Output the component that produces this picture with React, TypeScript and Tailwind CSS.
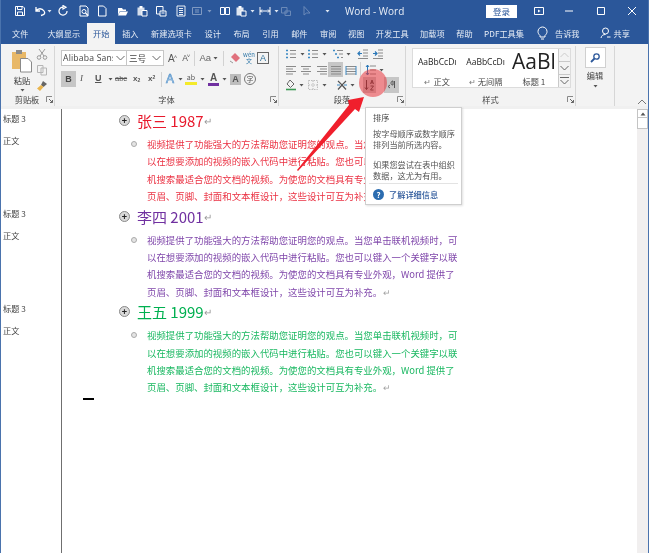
import React from "react";

const cjk = "font-['Noto_Sans_CJK_SC','Liberation_Sans',sans-serif]";

function Ic({ w = 12, h = 12, className = "", children }: { w?: number; h?: number; className?: string; children?: React.ReactNode }) {
    return (
        <svg width={w} height={h} viewBox={`0 0 ${w} ${h}`} fill="none" className={`shrink-0 ${className}`}>
            {children}
        </svg>
    );
}

function Dd({ className = "", color = "#555" }: { className?: string; color?: string }) {
    return (
        <Ic w={5} h={4} className={className}>
            <path d="M0.5 1 L4.5 1 L2.5 3.5 Z" fill={color} />
        </Ic>
    );
}

function Launcher({ className = "" }: { className?: string }) {
    return (
        <Ic w={7} h={7} className={className}>
            <path d="M0.5 6 V0.5 H6" stroke="#888" />
            <path d="M3 3 L6.5 6.5 M6.5 4 V6.5 H4" stroke="#666" />
        </Ic>
    );
}

function Sep({ className = "" }: { className?: string }) {
    return <div className={`w-px h-[15px] bg-[#d2d2d2] shrink-0 ${className}`} />;
}

function Lines({ kind, className = "" }: { kind: "l" | "c" | "r" | "j"; className?: string }) {
    const rows = {
        l: ["M1 2.5H11", "M1 5H8", "M1 7.5H11", "M1 10H8"],
        c: ["M1 2.5H11", "M3 5H9", "M1 7.5H11", "M3 10H9"],
        r: ["M1 2.5H11", "M4 5H11", "M1 7.5H11", "M4 10H11"],
        j: ["M1 2.5H11", "M1 5H11", "M1 7.5H11", "M1 10H11"],
    }[kind];
    return (
        <Ic className={className}>
            {rows.map((d) => (
                <path key={d} d={d} stroke="#8a8a8a" />
            ))}
        </Ic>
    );
}

function TitleBar() {
    const s = "#fff";
    return (
        <div className={`h-[22px] bg-[#2b579a] flex items-center pl-[14px] text-white ${cjk}`}>
            <Ic>
                <path d="M1.5 1.5H9L10.5 3V10.5H1.5Z M3.5 1.5V4.5H8V1.5 M3.5 10.5V7H8.5V10.5" stroke={s} />
            </Ic>
            <Ic className="ml-[8px]">
                <path d="M2 2V6H6 M2 6C4 3 8 3 10 6S9 10 7 10.5" stroke={s} strokeWidth="1.3" />
            </Ic>
            <Dd className="ml-[1px]" color="#dfe7f3" />
            <Ic className="ml-[5px]">
                <path d="M6.5 2.2A4 4 0 1 0 10 6 M6 0.5V4L9 2.2Z" stroke={s} strokeWidth="1.2" />
            </Ic>
            <Ic className="ml-[9px]">
                <path d="M2 1H8L10 3V11H2Z" stroke={s} />
                <circle cx="6" cy="6.5" r="2" stroke={s} />
                <path d="M7.5 8L10 10.5" stroke={s} strokeWidth="1.4" />
            </Ic>
            <Ic className="ml-[6px]">
                <path d="M2.5 1H7.5L10 3.5V11H2.5Z" stroke={s} />
            </Ic>
            <Ic className="ml-[9px]">
                <path d="M1 3H5L6 4.5H9V6H3L1 10Z" fill={s} />
                <path d="M3 6.5H11L9 10.5H1Z" fill={s} />
            </Ic>
            <Ic className="ml-[7px]">
                <path d="M1.5 2.5H8.5V10.5H1.5Z" fill={s} opacity="0.8" />
                <path d="M3.5 1H6.5V3.5H3.5Z" fill={s} />
                <path d="M6 5.5H11V11H6Z" fill="#2b579a" stroke={s} />
            </Ic>
            <Ic className="ml-[7px]">
                <path d="M1.5 1.5H8V9H1.5Z" stroke={s} />
                <path d="M5 6H11V11H5Z" fill="#2b579a" stroke={s} />
                <path d="M6.5 8H9.5" stroke={s} />
            </Ic>
            <Ic className="ml-[8px]">
                <path d="M2 1H10V11H2Z M4 3.5H8 M4 5.5H8 M4 7.5H8 M4 9.5H8" stroke={s} strokeWidth="0.9" />
            </Ic>
            <Ic className="ml-[4px] opacity-40">
                <path d="M1.5 2.5H10.5V9.5H1.5Z M4 5H8 M4 7H8" stroke={s} />
            </Ic>
            <Dd className="ml-[4px] opacity-40" color="#fff" />
            <Ic className="ml-[7px]">
                <path d="M1.5 2.5H5.5V9.5H1.5Z M6.5 2.5H10.5V9.5H6.5Z" stroke={s} />
            </Ic>
            <Ic className="ml-[4px]">
                <path d="M1.5 2.5H8.5V10.5H1.5Z" fill={s} opacity="0.85" />
                <path d="M3.5 1H6.5V3.5H3.5Z" fill={s} />
                <path d="M6 6H11V11H6Z" fill="#2b579a" stroke={s} />
            </Ic>
            <Dd className="ml-[3px]" color="#dfe7f3" />
            <Ic className="ml-[4px]">
                <path d="M1 2V10 M11 2V10 M1 6H11 M3 4.5L1.5 6L3 7.5 M9 4.5L10.5 6L9 7.5" stroke={s} />
            </Ic>
            <Dd className="ml-[3px]" color="#dfe7f3" />
            <Ic className="ml-[1px] opacity-30">
                <path d="M1.5 2.5H7V8H1.5Z M5 6H10.5V10.5H5Z" stroke={s} />
            </Ic>
            <Ic className="ml-[9px] opacity-30">
                <path d="M3 1.5V10L5.5 8H9Z" stroke={s} />
            </Ic>
            <Dd className="ml-[12px]" color="#dfe7f3" />
            <span className="ml-[15px] w-[60px] text-[10px] font-['Open_Sans',sans-serif] text-[#e9eef6] whitespace-nowrap">Word - Word</span>
            <div className="ml-[81px] w-[31px] h-[13px] bg-white text-[#2b579a] text-[8.5px] leading-[13px] text-center">登录</div>
            <Ic className="ml-[16px]">
                <path d="M1.5 2.5H10.5V9.5H1.5Z" stroke={s} />
                <path d="M5 4.5L7.5 6L5 7.5Z" fill={s} />
            </Ic>
            <Ic className="ml-[18px]">
                <path d="M2 6H10" stroke={s} />
            </Ic>
            <Ic className="ml-[20px]">
                <path d="M2.5 2.5H9.5V9.5H2.5Z" stroke={s} />
            </Ic>
            <Ic className="ml-[19px]">
                <path d="M2 2L10 10 M10 2L2 10" stroke={s} />
            </Ic>
        </div>
    );
}

const tabs = [
    { label: "文件", ml: "ml-[12px]" },
    { label: "大纲显示", ml: "ml-[19px]" },
    { label: "插入", ml: "ml-[7px]" },
    { label: "新建选项卡", ml: "ml-[12.5px]" },
    { label: "设计", ml: "ml-[12.5px]" },
    { label: "布局", ml: "ml-[12.5px]" },
    { label: "引用", ml: "ml-[12.5px]" },
    { label: "邮件", ml: "ml-[12.5px]" },
    { label: "审阅", ml: "ml-[12.5px]" },
    { label: "视图", ml: "ml-[11.5px]" },
    { label: "开发工具", ml: "ml-[11.5px]" },
    { label: "加载项", ml: "ml-[11.5px]" },
    { label: "帮助", ml: "ml-[11.5px]" },
    { label: "PDF工具集", ml: "ml-[11.5px]" },
];

function TabRow() {
    return (
        <div className={`h-[22px] bg-[#2b579a] flex items-center text-[8.2px] text-[#e6ecf5] whitespace-nowrap ${cjk}`}>
            {tabs.slice(0, 2).map((t) => (
                <span key={t.label} className={t.ml}>{t.label}</span>
            ))}
            <div className="ml-[7px] w-[28px] h-[21px] self-end bg-[#f3f3f3] text-[#2b579a] text-center leading-[21px]">开始</div>
            {tabs.slice(2).map((t) => (
                <span key={t.label} className={t.ml}>{t.label}</span>
            ))}
            <Ic className="ml-[13px]" w={11} h={14}>
                <path d="M3 9.5C1.5 8 1 7 1 5.5A4.5 4.5 0 0 1 10 5.5C10 7 9.5 8 8 9.5V11H3Z M4 13H7" stroke="#fff" />
            </Ic>
            <span className="ml-[7px]">告诉我</span>
            <Ic className="ml-[20px]" w={11} h={12}>
                <circle cx="5.5" cy="4" r="3" stroke="#fff" />
                <path d="M1 11C1.5 8.5 3 7.5 5.5 7.5 M7 10H10.5" stroke="#fff" />
            </Ic>
            <span className="ml-[3px]">共享</span>
        </div>
    );
}

function GroupLabel({ label, launcherClass }: { label: string; launcherClass: string }) {
    return (
        <div className={`h-[13px] relative flex items-center justify-center text-[8.2px] text-[#444] ${cjk}`}>
            {label}
            <Launcher className={launcherClass} />
        </div>
    );
}

function Clipboard() {
    return (
        <div className="w-[55px] shrink-0 border-r border-[#d6d6d6] flex flex-col">
            <div className="flex-1 flex pl-[11px]">
                <div className={`w-[22px] flex flex-col items-center pt-[3px] text-[8.2px] text-[#333] ${cjk}`}>
                    <Ic w={22} h={24}>
                        <path d="M1 3H15V20H1Z" fill="#e8b868" />
                        <path d="M5 1H11V5H5Z" fill="#8a8a8a" />
                        <path d="M9.5 9.5H17L20.5 13V23H9.5Z" fill="#fff" stroke="#8a8a8a" />
                    </Ic>
                    <span className="mt-[1px] leading-[12px]">粘贴</span>
                    <Dd className="mt-[2px]" />
                </div>
                <div className="ml-[3px] pt-[2px] flex flex-col gap-[4px]">
                    <Ic>
                        <path d="M3 1L8 8 M9 1L4 8" stroke="#9a9a9a" />
                        <circle cx="3" cy="9.5" r="1.8" stroke="#9a9a9a" />
                        <circle cx="9" cy="9.5" r="1.8" stroke="#9a9a9a" />
                    </Ic>
                    <Ic>
                        <path d="M1.5 1.5H7V8.5H1.5Z M5 4H10.5V11H5Z" stroke="#b5b5b5" fill="#f3f3f3" />
                    </Ic>
                    <Ic>
                        <path d="M7 1L11 4L7.5 7L5 5Z" fill="#666" />
                        <path d="M5 5L7.5 7L4 11L1 8.5Z" fill="#e9b44c" />
                    </Ic>
                </div>
            </div>
            <GroupLabel label="剪贴板" launcherClass="absolute left-[46px] top-[3px]" />
        </div>
    );
}

function FontGroup() {
    return (
        <div className="w-[224px] shrink-0 border-r border-[#d6d6d6] flex flex-col">
            <div className="flex-1 pt-[4px] pl-[6px]">
                <div className="h-[16px] flex items-center">
                    <div className="w-[66px] h-[16px] bg-white border border-[#c6c6c6] flex items-center pl-[1px] overflow-hidden">
                        <span className={`text-[8.6px] text-[#444] whitespace-nowrap w-[50px] overflow-hidden tracking-[0.2px] font-['Open_Sans',sans-serif]`}>Alibaba Sans</span>
                        <Ic w={9} h={6} className="ml-[3px]">
                            <path d="M0.5 1L4.5 5L8.5 1" stroke="#666" />
                        </Ic>
                    </div>
                    <div className={`w-[37px] h-[16px] bg-white border border-l-0 border-[#c6c6c6] flex items-center pl-[2px] text-[8.6px] text-[#444] ${cjk}`}>
                        三号
                        <Ic w={9} h={6} className="ml-[6px]">
                            <path d="M0.5 1L4.5 5L8.5 1" stroke="#666" />
                        </Ic>
                    </div>
                    <span className="ml-[4px] text-[10px] font-['Liberation_Sans',sans-serif] text-[#555]">A<sup className="text-[6px] -ml-[1px]">˄</sup></span>
                    <span className="ml-[5px] text-[8.5px] font-['Liberation_Sans',sans-serif] text-[#555]">A<sup className="text-[6px] -ml-[1px]">˅</sup></span>
                    <Sep className="ml-[4px]" />
                    <span className="ml-[4px] text-[9.5px] font-['Liberation_Sans',sans-serif] text-[#666]">Aa</span>
                    <Dd className="ml-[2px]" />
                    <Sep className="ml-[5px]" />
                    <Ic className="ml-[5px]">
                        <path d="M6 1L11 6L7 10L2 5Z" fill="#e0707c" />
                        <path d="M1 9L4 11" stroke="#999" />
                    </Ic>
                    <span className={`ml-[2px] w-[12px] text-center text-[6px] leading-[6px] text-[#2f77a8] ${cjk}`}>wén<br />文</span>
                    <div className="ml-[2px] w-[12px] h-[12px] border border-[#666] text-[9px] leading-[11px] text-center font-['Liberation_Sans',sans-serif] text-[#2f6f97]">A</div>
                </div>
                <div className="mt-[5px] h-[16px] flex items-center font-['Liberation_Sans',sans-serif] text-[#555]">
                    <div className="w-[15px] h-[16px] bg-[#c6c6c6] text-[9px] font-bold text-center leading-[16px] text-[#444]">B</div>
                    <span className="ml-[4px] w-[6px] text-[9px] italic font-['Liberation_Serif',serif]">I</span>
                    <span className="ml-[9px] w-[7px] text-[9px] font-bold underline text-[#555]">U</span>
                    <Dd className="ml-[6px]" />
                    <span className="ml-[2px] text-[7.5px] w-[14px] line-through">abc</span>
                    <span className="ml-[4px] text-[8px] font-bold w-[10px]">x<sub className="text-[5px]">2</sub></span>
                    <span className="ml-[5px] text-[8px] font-bold w-[10px]">x<sup className="text-[5px]">2</sup></span>
                    <Sep className="ml-[3px]" />
                    <span className="ml-[4px] text-[12px] w-[10px] text-[#cfe3f5] [-webkit-text-stroke:0.6px_#4a8cc7]">A</span>
                    <Dd className="ml-[2px]" />
                    <div className="ml-[2px] w-[12px] h-[14px] flex flex-col items-center">
                        <span className={`text-[7px] leading-[10px] text-[#555] ${cjk}`}>ab</span>
                        <div className="w-[12px] h-[3px] bg-[#f4ea2a]" />
                    </div>
                    <Dd className="ml-[3px]" />
                    <div className="ml-[3px] w-[11px] h-[14px] flex flex-col items-center">
                        <span className="text-[10px] leading-[11px] text-[#555] font-bold">A</span>
                        <div className="w-[11px] h-[3px] bg-[#7030a0]" />
                    </div>
                    <Dd className="ml-[3px]" />
                    <div className="ml-[3px] w-[11px] h-[11px] bg-[#bdbdbd] text-[9px] leading-[11px] text-center font-bold">A</div>
                    <div className={`ml-[3px] w-[12px] h-[12px] rounded-full border border-[#777] text-[7px] leading-[10px] text-center ${cjk}`}>字</div>
                </div>
            </div>
            <GroupLabel label="字体" launcherClass="absolute left-[215px] top-[3px]" />
        </div>
    );
}

function ListIcon({ className = "" }: { className?: string }) {
    return (
        <Ic className={className}>
            <path d="M1 2.5H3 M1 6H3 M1 9.5H3" stroke="#3d8ac4" strokeWidth="1.4" />
            <path d="M5 2.5H11 M5 6H11 M5 9.5H11" stroke="#8a8a8a" />
        </Ic>
    );
}

function ParagraphGroup() {
    return (
        <div className="w-[127px] shrink-0 border-r border-[#d6d6d6] flex flex-col">
            <div className="flex-1 pl-[6px]">
                <div className="h-[14px] flex items-center mt-[1px]">
                    <ListIcon />
                    <Dd className="ml-[3px]" />
                    <ListIcon className="ml-[2px]" />
                    <Dd className="ml-[3px]" />
                    <Ic className="ml-[5px]">
                        <path d="M1 2.5H3 M3 6H5 M5 9.5H7" stroke="#3d8ac4" strokeWidth="1.4" />
                        <path d="M5 2.5H11 M7 6H11 M9 9.5H11" stroke="#8a8a8a" />
                    </Ic>
                    <Dd className="ml-[2px]" />
                    <Ic className="ml-[6px]">
                        <path d="M6 2H11 M6 5H11 M6 8H11 M1 10.5H11" stroke="#8a8a8a" />
                        <path d="M5 5.5H1 M3 3.5L1 5.5L3 7.5" stroke="#2b78b8" strokeWidth="1.2" />
                    </Ic>
                    <Ic className="ml-[3px]">
                        <path d="M6 2H11 M6 5H11 M6 8H11 M1 10.5H11" stroke="#8a8a8a" />
                        <path d="M1 5.5H5 M3 3.5L5 5.5L3 7.5" stroke="#2b78b8" strokeWidth="1.2" />
                    </Ic>
                </div>
                <div className="h-[15px] flex items-center mt-[1px]">
                    <Lines kind="l" />
                    <Lines kind="c" className="ml-[3px]" />
                    <Lines kind="r" className="ml-[4px]" />
                    <div className="ml-[0px] w-[15px] h-[15px] bg-[#c6c6c6] flex items-center justify-center">
                        <Lines kind="j" />
                    </div>
                    <Ic className="ml-[2px]">
                        <path d="M1 2.5H11 M1 5H11 M1 7.5H11 M1 10H11" stroke="#8a8a8a" />
                        <path d="M1 2V11 M11 2V11" stroke="#3d8ac4" />
                    </Ic>
                    <Sep className="ml-[3px]" />
                    <Ic className="ml-[4px]">
                        <path d="M5 2H11 M5 6H11 M5 10H11" stroke="#8a8a8a" />
                        <path d="M2.5 1V11 M1 3L2.5 1L4 3 M1 9L2.5 11L4 9" stroke="#2b78b8" />
                    </Ic>
                    <Dd className="ml-[2px]" />
                </div>
                <div className="h-[16px] flex items-center">
                    <Ic>
                        <path d="M5 1L9 5L5.5 8.5L2 5Z" stroke="#666" />
                        <path d="M1 10.5H11" stroke="#3d9a55" strokeWidth="1.6" />
                    </Ic>
                    <Dd className="ml-[2px]" />
                    <Ic className="ml-[3px]">
                        <path d="M1.5 1.5H10.5V10.5H1.5Z M6 1.5V10.5 M1.5 6H10.5" stroke="#bdbdbd" strokeDasharray="1.5 1" />
                    </Ic>
                    <Dd className="ml-[3px]" />
                    <Ic className="ml-[9px]">
                        <path d="M2 2L6 6L10 2 M6 6L2 10.5 M6 6L10 10.5" stroke="#555" strokeWidth="1.2" />
                        <path d="M1 6H4 M8 6H11" stroke="#3d8ac4" />
                    </Ic>
                    <Dd className="ml-[2px]" />
                    <div className="ml-[8px] w-[13px] h-[16px] flex items-center justify-center bg-[#c6c6c6]">
                        <Ic>
                            <path d="M2.5 1V10.5 M1 8.5L2.5 10.5L4 8.5" stroke="#333" />
                            <path d="M6.5 5L8 1L9.5 5 M7 3.8H9 M6.5 7H9.5L6.5 11H9.5" stroke="#333" strokeWidth="0.9" />
                        </Ic>
                    </div>
                    <div className="ml-[8px] w-[15px] h-[16px] bg-[#c6c6c6] flex items-center justify-center">
                        <Ic>
                            <path d="M7 2C5.5 2 5 3 5 4.5C5 5.5 6 6 7 6V2 M8.5 2V9 M4 9L2 7.5L4 6" stroke="#555" />
                        </Ic>
                    </div>
                </div>
            </div>
            <GroupLabel label="段落" launcherClass="absolute left-[118px] top-[3px]" />
        </div>
    );
}

function StyleItem({ sample, label, big = false, mark = true }: { sample: string; label: string; big?: boolean; mark?: boolean }) {
    return (
        <div className="w-[49px] flex flex-col items-center overflow-hidden">
            <div className={`h-[26px] flex items-center whitespace-nowrap font-['Open_Sans',sans-serif] text-[#222] ${big ? "text-[21px]" : "text-[8.5px]"}`}>{sample}</div>
            <div className={`text-[8.2px] leading-[12px] text-[#444] ${cjk}`}>
                {mark && <span className="text-[#777] mr-[2px]">↵</span>}
                {label}
            </div>
        </div>
    );
}

function StylesGroup() {
    return (
        <div className="w-[170px] shrink-0 border-r border-[#d6d6d6] flex flex-col">
            <div className="flex-1 pl-[6px] pt-[2px]">
                <div className="flex h-[40px] w-[159px] border border-[#dcdcdc] bg-white">
                    <StyleItem sample="AaBbCcDı" label="正文" />
                    <StyleItem sample="AaBbCcDı" label="无间隔" />
                    <StyleItem sample="AaBl" label="标题 1" big mark={false} />
                    <div className="w-[12px] flex flex-col border-l border-[#c9c9c9] bg-[#f3f3f3]">
                        <div className="h-[13px] flex items-center justify-center border-b border-[#c9c9c9]">
                            <Ic w={9} h={6}><path d="M0.5 5L4.5 1L8.5 5" stroke="#ccc" /></Ic>
                        </div>
                        <div className="h-[13px] flex items-center justify-center border-b border-[#c9c9c9]">
                            <Ic w={9} h={6}><path d="M0.5 1L4.5 5L8.5 1" stroke="#666" /></Ic>
                        </div>
                        <div className="flex-1 flex flex-col items-center justify-center gap-[1px]">
                            <div className="w-[9px] h-px bg-[#666]" />
                            <Ic w={9} h={6}><path d="M0.5 1L4.5 5L8.5 1" stroke="#666" /></Ic>
                        </div>
                    </div>
                </div>
            </div>
            <GroupLabel label="样式" launcherClass="absolute left-[161px] top-[3px]" />
        </div>
    );
}

function EditGroup() {
    return (
        <div className="w-[39px] shrink-0 border-r border-[#d6d6d6] flex flex-col items-center pt-[1px]">
            <div className="w-[21px] h-[21px] bg-white border border-[#d0d0d0] flex items-center justify-center">
                <Ic>
                    <circle cx="7.5" cy="4.5" r="2.7" stroke="#2b579a" strokeWidth="1.3" />
                    <path d="M5.5 6.5L2 10" stroke="#2b579a" strokeWidth="1.8" />
                </Ic>
            </div>
            <span className={`mt-[1px] text-[8.2px] leading-[12px] text-[#444] ${cjk}`}>编辑</span>
            <Dd className="mt-[3px]" />
        </div>
    );
}

function Ribbon() {
    return (
        <div className="h-[62px] bg-[#f3f3f3] flex pt-[2px]">
            <Clipboard />
            <FontGroup />
            <ParagraphGroup />
            <StylesGroup />
            <EditGroup />
            <div className="flex-1 flex items-end justify-end pr-[2px] pb-[1px]">
                <Ic w={10} h={6}><path d="M1 5L5 1L9 5" stroke="#777" /></Ic>
            </div>
        </div>
    );
}

function Section({ title, color, lines }: { title: string; color: string; lines: string[] }) {
    return (
        <div className="h-[95.6px] pl-[57px]">
            <div className={`h-[21px] flex items-center ${cjk}`}>
                <div className="w-[11px] h-[11px] rounded-full bg-[#d9d9d9] border border-[#8a8a8a] flex items-center justify-center text-[9px] leading-none text-[#222] font-bold">+</div>
                <span className={`ml-[7px] text-[15px] leading-[21px] whitespace-nowrap ${color}`}>{title}</span>
                <span className="text-[10px] text-[#999]">↵</span>
            </div>
            <div className="mt-[5px] flex">
                <div className="ml-[12px] mt-[5px] w-[6px] h-[6px] rounded-full border border-[#aaa] bg-[#e4e4e4] shrink-0" />
                <div className={`ml-[10px] text-[9.42px] leading-[17.4px] whitespace-nowrap opacity-90 ${color} ${cjk}`}>
                    {lines.map((l, i) => (
                        <div key={i}>
                            {l}
                            {i === lines.length - 1 && <span className="text-[#999] ml-[1px]">↵</span>}
                        </div>
                    ))}
                </div>
            </div>
        </div>
    );
}

const bodyLines = [
    "视频提供了功能强大的方法帮助您证明您的观点。当您单击联机视频时，可",
    "以在想要添加的视频的嵌入代码中进行粘贴。您也可以键入一个关键字以联",
    "机搜索最适合您的文档的视频。为使您的文档具有专业外观，Word 提供了",
    "页眉、页脚、封面和文本框设计，这些设计可互为补充。",
];

function Gutter() {
    return (
        <div className={`w-[62px] shrink-0 border-r-[1.5px] border-[#6f6f6f] pl-[3px] pt-[3px] text-[8.2px] leading-[12px] text-[#444] ${cjk}`}>
            <div className="h-[95px]">
                <div>标题 3</div>
                <div className="mt-[10px]">正文</div>
            </div>
            <div className="h-[95px]">
                <div>标题 3</div>
                <div className="mt-[10px]">正文</div>
            </div>
            <div>
                <div>标题 3</div>
                <div className="mt-[10px]">正文</div>
            </div>
        </div>
    );
}

function Scrollbar() {
    return (
        <div className="w-[11px] shrink-0 bg-[#f1efef] flex flex-col">
            <div className="h-[9px] bg-white border border-[#c4c4c4] flex items-center justify-center">
                <Ic w={6} h={4}><path d="M0.5 3.5H5.5L3 0.5Z" fill="#555" /></Ic>
            </div>
            <div className="h-[11px] bg-white border border-t-0 border-[#c4c4c4]" />
        </div>
    );
}

function Tooltip() {
    return (
        <div className={`absolute left-[364px] top-[107px] w-[97px] h-[98px] bg-white border border-[#cfcfcf] shadow-[1px_1px_2px_rgba(0,0,0,0.12)] text-[8.2px] text-[#555] px-[7px] pt-[4px] ${cjk}`}>
            <div className="leading-[11px] text-[#444]">排序</div>
            <div className="mt-[5px] leading-[11px] whitespace-nowrap">
                按字母顺序或数字顺序
                <br />
                排列当前所选内容。
            </div>
            <div className="mt-[9px] leading-[10.5px] whitespace-nowrap">
                如果您尝试在表中组织
                <br />
                数据，这尤为有用。
            </div>
            <div className="mt-[3px] -mx-[4px] h-px bg-[#e3e3e3]" />
            <div className="mt-[4px] flex items-center text-[#2b579a] font-medium whitespace-nowrap">
                <div className="w-[11px] h-[11px] rounded-full bg-[#2b6cb0] text-white text-[8px] font-bold leading-[11px] text-center">?</div>
                <span className="ml-[5px]">了解详细信息</span>
            </div>
        </div>
    );
}

export default function App() {
    return (
        <div className="relative w-[649px] h-[553px] overflow-hidden bg-white border-x border-[#4a73ad] box-border blur-[0.35px]">
            <div className="-mx-px">
                <TitleBar />
                <TabRow />
                <Ribbon />
            </div>
            <div className="h-[3px] -mx-px bg-[#f0f0f0]" />
            <div className="h-[444px] flex -ml-px">
                <Gutter />
                <div className="flex-1 pt-[1px] relative">
                    <Section title="张三 1987" color="text-[#e8192c]" lines={bodyLines} />
                    <Section title="李四 2001" color="text-[#7030a0]" lines={bodyLines} />
                    <Section title="王五 1999" color="text-[#00b050]" lines={bodyLines} />
                    <div className="ml-[21px] mt-[1px] w-[11px] h-[2px] bg-black" />
                </div>
                <Scrollbar />
            </div>
            {/* sort button highlight */}
            <div className="absolute left-[358px] top-[69px] w-[28px] h-[28px] rounded-full bg-[#e8353c]/55" />
            <Tooltip />
            <svg width="80" height="85" viewBox="0 0 80 85" className="absolute left-[290px] top-[92px]">
                <path d="M6 78 L58 13 L57 8 L73 5 L68 20 L64 17 L7 79 Z" fill="#f01f2c" />
            </svg>
        </div>
    );
}
